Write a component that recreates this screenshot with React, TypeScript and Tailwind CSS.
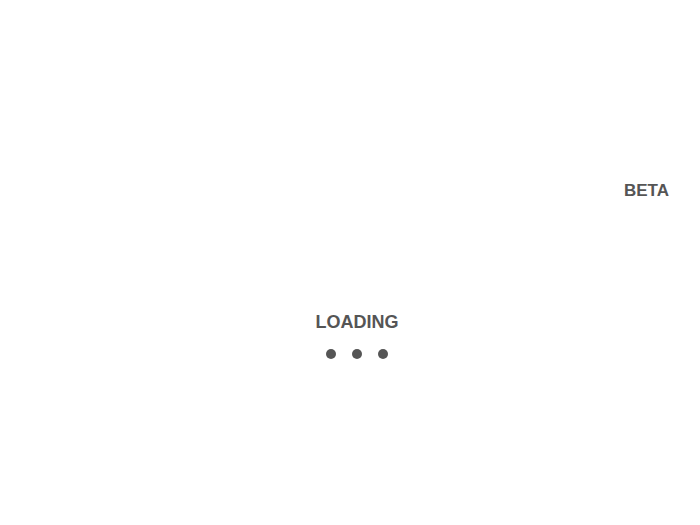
import React from 'react';

export default function App() {
  return (
    <div className="w-[700px] h-[525px] bg-white flex flex-col font-['Liberation_Sans',Arial,sans-serif] text-[#555555]">
      {/* Beta tag */}
      <div className="flex justify-end pt-[181px] pr-[31px]">
        <span className="text-[17px] leading-[20px] font-bold">BETA</span>
      </div>

      {/* Loader */}
      <div className="flex flex-col items-center pt-[110px] pl-[14px]">
        <span className="text-[18px] leading-[22px] font-bold">LOADING</span>
        <div className="flex gap-[16px] mt-[16px]">
          <span className="w-[10px] h-[10px] rounded-full bg-[#555555]" />
          <span className="w-[10px] h-[10px] rounded-full bg-[#555555]" />
          <span className="w-[10px] h-[10px] rounded-full bg-[#555555]" />
        </div>
      </div>
    </div>
  );
}
